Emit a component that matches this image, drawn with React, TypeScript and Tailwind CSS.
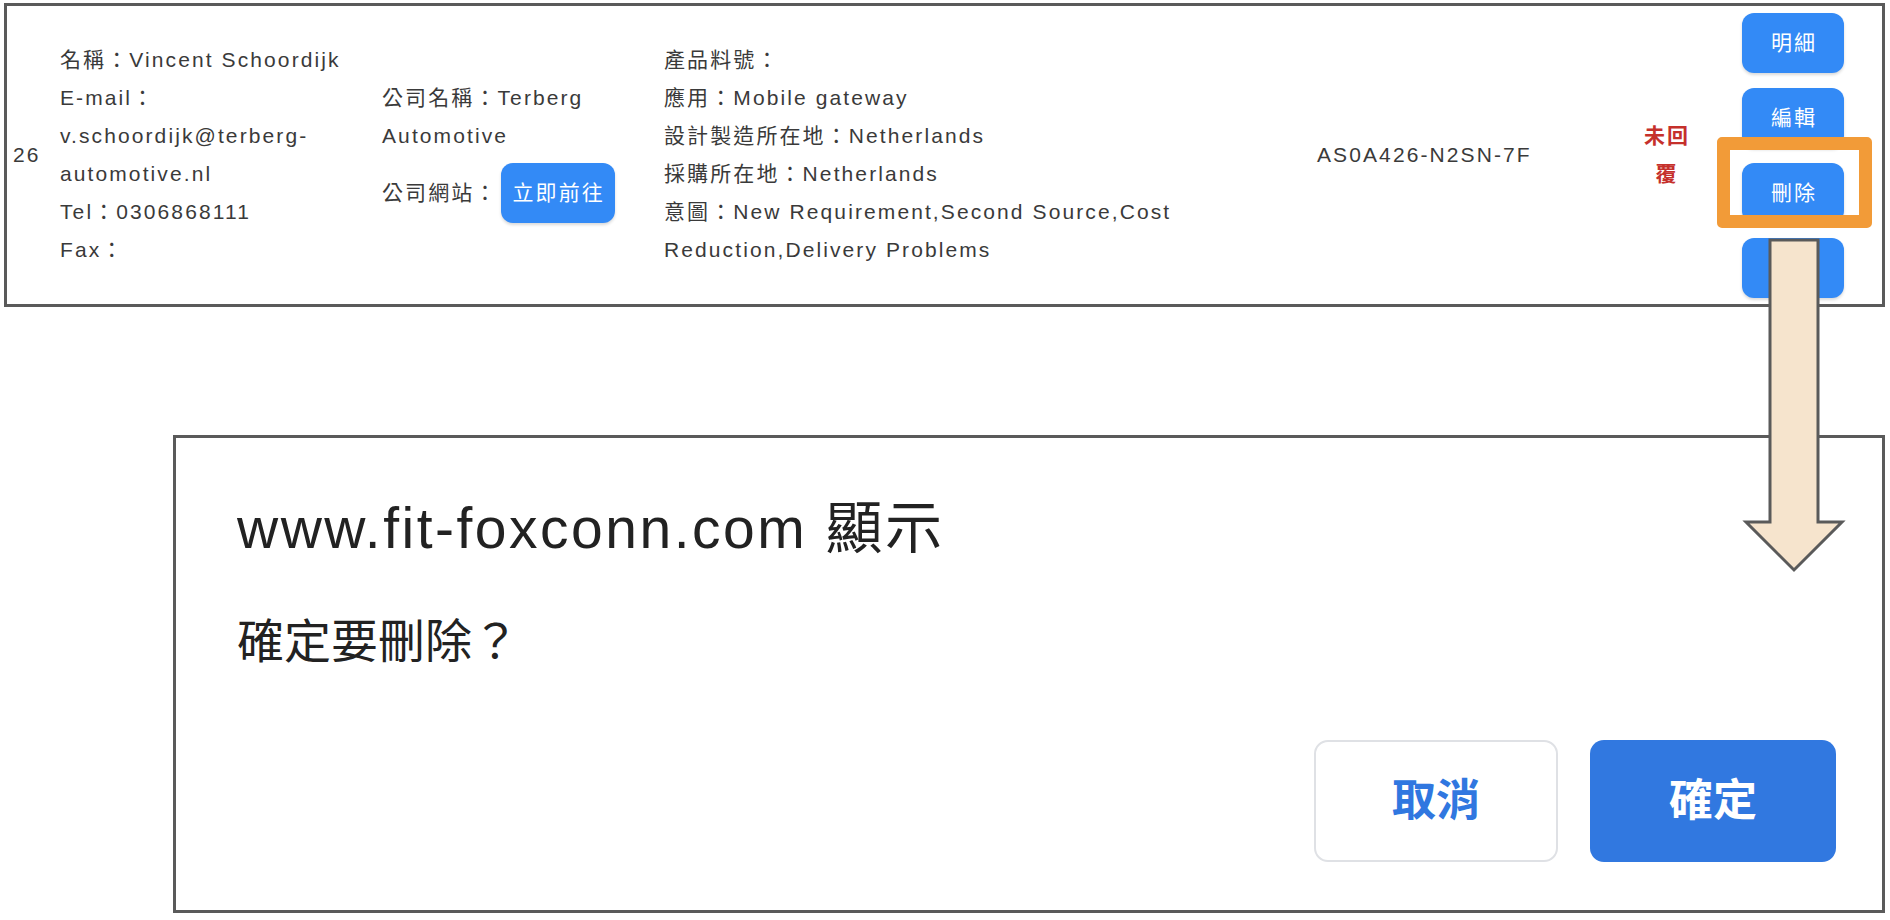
import React from 'react'

const rowFont = "font-['Liberation_Sans','Noto_Sans_CJK_TC',sans-serif]"

function BlueButton({ label }: { label?: string }) {
  return (
    <div className="flex h-[60px] w-[102px] items-center justify-center rounded-[12px] bg-[#338af6] pl-[2px] text-white shadow-[0_2px_3px_rgba(0,0,0,0.15)]">
      {label}
    </div>
  )
}

export default function App() {
  return (
    <div className={`relative h-[920px] w-[1890px] overflow-hidden bg-white text-[#3a3a3a] ${rowFont}`}>
      {/* inquiry row */}
      <div className="ml-[4px] mt-[3px] flex h-[304px] w-[1881px] items-center border-[3px] border-[#5a5a5a] text-[21px] leading-[38px] tracking-[2.1px]">
        <div className="w-[53px] shrink-0 pl-[6px]">26</div>

        <div className="w-[322px] shrink-0">
          <div className="w-[310px]">
            <p>名稱：Vincent Schoordijk</p>
            <p>E-mail：v.schoordijk@terberg-automotive.nl</p>
            <p>Tel：0306868111</p>
            <p>Fax：</p>
          </div>
        </div>

        <div className="w-[282px] shrink-0">
          <div className="w-[250px]">
            <p>公司名稱：Terberg Automotive</p>
            <div className="my-[8px] flex items-center">
              <span>公司網站：</span>
              <span className="ml-[3px] flex h-[60px] items-center rounded-[12px] bg-[#338af6] pl-[12px] pr-[10px] text-white shadow-[0_2px_3px_rgba(0,0,0,0.15)]">
                立即前往
              </span>
            </div>
          </div>
        </div>

        <div className="w-[653px] shrink-0">
          <div className="w-[560px]">
            <p>產品料號：</p>
            <p>應用：Mobile gateway</p>
            <p>設計製造所在地：Netherlands</p>
            <p>採購所在地：Netherlands</p>
            <p>意圖：New Requirement,Second Source,Cost Reduction,Delivery Problems</p>
          </div>
        </div>

        <div className="w-[322px] shrink-0">AS0A426-N2SN-7F</div>

        <div className="w-[56px] shrink-0 text-center font-bold text-[#c5302b]">未回覆</div>

        <div className="ml-[47px] flex flex-col gap-[15px]">
          <BlueButton label="明細" />
          <BlueButton label="編輯" />
          <BlueButton label="刪除" />
          <BlueButton />
        </div>
      </div>

      {/* browser confirm dialog */}
      <div className="ml-[173px] mt-[128px] flex h-[478px] w-[1712px] flex-col border-[3px] border-[#5a5a5a] pl-[61px] pt-[56px] text-[#222]">
        <p className="text-[57px] leading-[68px] tracking-[2.5px]">www.fit-foxconn.com 顯示</p>
        <p className="mt-[52px] text-[47px] leading-[56px]">確定要刪除？</p>
        <div className="mt-[70px] flex justify-end gap-[32px] pr-[46px]">
          <button className="flex h-[122px] w-[244px] items-center justify-center rounded-[14px] border-2 border-[#dfe1e5] bg-white text-[44px] font-bold text-[#3077e0]">
            取消
          </button>
          <button className="flex h-[122px] w-[246px] items-center justify-center rounded-[14px] bg-[#3178e0] text-[44px] font-bold text-white">
            確定
          </button>
        </div>
      </div>

      {/* highlight around the delete button */}
      <div className="absolute left-[1717px] top-[137px] h-[91px] w-[155px] rounded-[5px] border-[13px] border-[#f29b38]" />

      {/* arrow down to the dialog */}
      <svg className="absolute left-[1740px] top-[235px]" width="110" height="340" viewBox="0 0 110 340">
        <polygon
          points="30,5 78,5 78,287 102,287 54,335 6,287 30,287"
          fill="#f6e4cd"
          stroke="#5a5a5a"
          strokeWidth="3"
          strokeLinejoin="miter"
        />
      </svg>
    </div>
  )
}
